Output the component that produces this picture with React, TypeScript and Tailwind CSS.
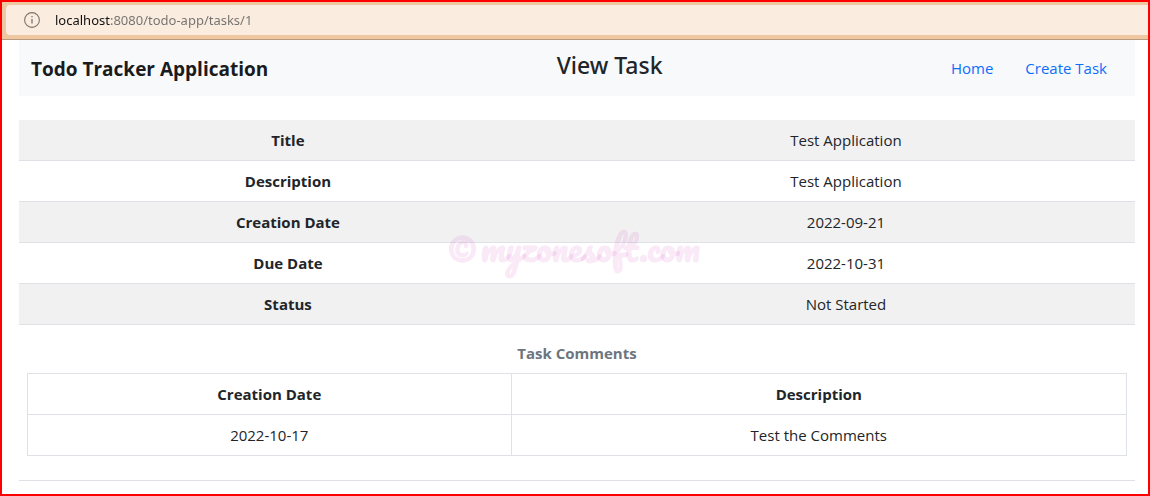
import React from "react";

const details: [string, string][] = [
  ["Title", "Test Application"],
  ["Description", "Test Application"],
  ["Creation Date", "2022-09-21"],
  ["Due Date", "2022-10-31"],
  ["Status", "Not Started"],
];

const comments = [{ date: "2022-10-17", description: "Test the Comments" }];

function AddressBar() {
  return (
    <div className="border-b border-[#b89a7f] bg-[#efc7a1] pt-[3px] pb-1 pl-1">
      <div className="flex h-[30px] items-center gap-[15px] rounded-l bg-[#faecdf] pl-[18px]">
        <svg className="size-4 shrink-0" viewBox="0 0 16 16" fill="none" stroke="#7b746e" aria-hidden="true">
          <circle cx="8" cy="8" r="7.4" strokeWidth="1.1" />
          <path d="M8 7v4.5" strokeWidth="1.3" />
          <circle cx="8" cy="4.8" r="0.8" fill="#7b746e" stroke="none" />
        </svg>
        <input
          type="text"
          aria-label="Address"
          defaultValue="localhost:8080/todo-app/tasks/1"
          className="min-w-0 flex-1 bg-[linear-gradient(to_right,#111111_55px,#73706d_55px)] bg-clip-text font-['Noto_Sans','Open_Sans',sans-serif] text-[13px] leading-5 text-transparent outline-none"
        />
      </div>
    </div>
  );
}

function Header() {
  return (
    <header className="flex h-14 items-center justify-between bg-[#f8f9fa] pr-7 pl-3">
      <span className="pt-0.5 text-[19px] leading-7 font-bold text-[#191b1d]">Todo Tracker Application</span>
      <h1 className="pb-1.5 font-['Noto_Sans','Open_Sans',sans-serif] text-[23px] leading-7 font-medium">View Task</h1>
      <nav className="flex gap-8 text-[#0d6efd]">
        <a href="#home">Home</a>
        <a href="#create">Create Task</a>
      </nav>
    </header>
  );
}

export default function App() {
  return (
    <div className="min-h-screen border-2 border-[#ff0000] bg-white font-['Open_Sans','Noto_Sans',sans-serif] text-[15px] leading-6 text-[#212529]">
      <AddressBar />
      <main className="pr-[13px] pl-[17px]">
        <Header />
        <div className="relative mt-6">
          <table className="w-full table-fixed border-separate border-spacing-0 text-center">
            <colgroup>
              <col className="w-[48.2%]" />
              <col />
            </colgroup>
            <tbody>
              {details.map(([label, value]) => (
                <tr key={label} className="odd:bg-[#f1f1f1]">
                  <th scope="row" className="border-b border-[#dee2e6] p-2 font-bold">{label}</th>
                  <td className="border-b border-[#dee2e6] p-2">{value}</td>
                </tr>
              ))}
            </tbody>
          </table>
          <div className="pointer-events-none absolute inset-x-0 top-[104px] flex h-12 items-center justify-center gap-1.5 pr-2 font-['Pacifico',cursive] text-[34px] leading-[48px] font-bold text-[#d84fc4]/15">
            <span className="pt-6 text-[44px] leading-none">©</span>
            <span>myzonesoft.com</span>
          </div>
        </div>
        <section className="border-b border-[#dee2e6] px-2 pt-2 pb-6">
          <table className="w-full table-fixed border-collapse text-center">
            <caption className="py-2 font-bold text-[#6c757d]">Task Comments</caption>
            <colgroup>
              <col className="w-[44%]" />
              <col />
            </colgroup>
            <thead>
              <tr>
                <th scope="col" className="border border-[#dee2e6] p-2 font-bold">Creation Date</th>
                <th scope="col" className="border border-[#dee2e6] p-2 font-bold">Description</th>
              </tr>
            </thead>
            <tbody>
              {comments.map((comment) => (
                <tr key={comment.date}>
                  <td className="border border-[#dee2e6] p-2">{comment.date}</td>
                  <td className="border border-[#dee2e6] p-2">{comment.description}</td>
                </tr>
              ))}
            </tbody>
          </table>
        </section>
      </main>
    </div>
  );
}
